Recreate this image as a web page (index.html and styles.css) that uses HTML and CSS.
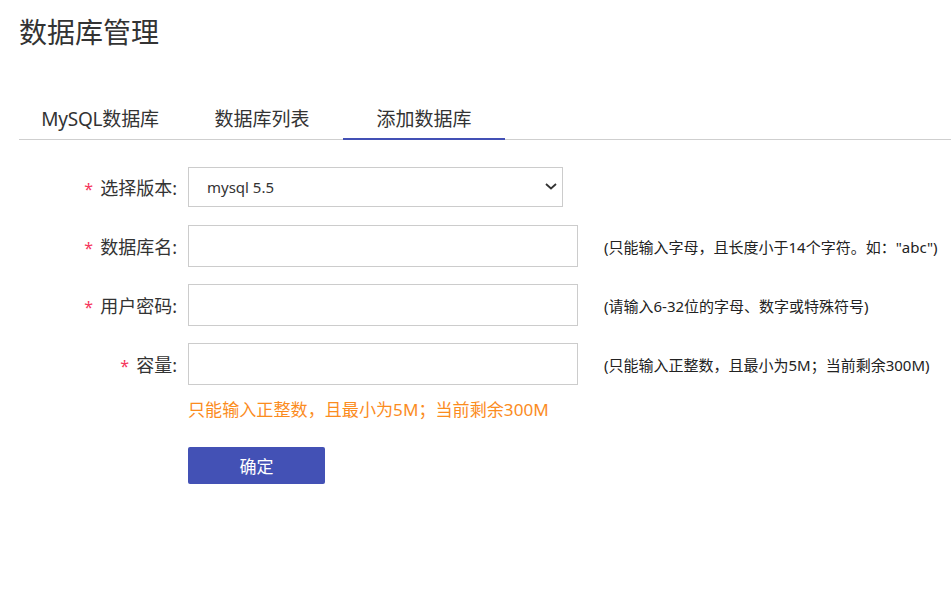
FILE: index.html
```html
<!DOCTYPE html>
<html lang="zh-CN">
<head>
<meta charset="utf-8">
<title>数据库管理</title>
<link rel="stylesheet" href="styles.css">
</head>
<body>
<div class="page">
  <h1 class="title">数据库管理</h1>
  <div class="tabs">
    <div class="tab">MySQL数据库</div>
    <div class="tab">数据库列表</div>
    <div class="tab active">添加数据库</div>
  </div>
  <form class="form">
    <div class="row row-select">
      <label class="label"><span class="req">*</span>选择版本:</label>
      <div class="select-wrap">
        <select class="select">
          <option>mysql 5.5</option>
        </select>
        <svg class="chevron" width="12" height="7" viewBox="0 0 12 7"><path d="M1 1l5 4.5L11 1" fill="none" stroke="#333" stroke-width="1.8"/></svg>
      </div>
    </div>
    <div class="row">
      <label class="label"><span class="req">*</span>数据库名:</label>
      <input class="input" type="text">
      <span class="hint">(只能输入字母，且长度小于14个字符。如："abc")</span>
    </div>
    <div class="row">
      <label class="label"><span class="req">*</span>用户密码:</label>
      <input class="input" type="text">
      <span class="hint">(请输入6-32位的字母、数字或特殊符号)</span>
    </div>
    <div class="row">
      <label class="label"><span class="req">*</span>容量:</label>
      <input class="input" type="text">
      <span class="hint">(只能输入正整数，且最小为5M；当前剩余300M)</span>
    </div>
    <div class="error">只能输入正整数，且最小为5M；当前剩余300M</div>
    <button class="btn" type="button">确定</button>
  </form>
</div>
</body>
</html>
```

FILE: styles.css
```css
* { box-sizing: border-box; }
body {
  margin: 0;
  background: #fff;
  color: #333;
  font-family: "Noto Sans", "Noto Sans CJK SC", sans-serif;
}
.page {
  padding-left: 19px;
}
.title {
  margin: 14px 0 0;
  font-size: 28px;
  line-height: 36px;
  font-weight: normal;
  color: #333;
}
.tabs {
  margin-top: 49px;
  display: flex;
  border-bottom: 1px solid #cfcfcf;
}
.tab {
  width: 162px;
  text-align: center;
  font-size: 19px;
  line-height: 40px;
  height: 40px;
  color: #333;
}
.tab:first-child { letter-spacing: -0.2px; }
.tab.active {
  border-bottom: 2px solid #4350b5;
  margin-bottom: -1px;
  height: 41px;
}
.form {
  margin-top: 27px;
  display: flex;
  flex-direction: column;
}
.row {
  display: flex;
  align-items: center;
  margin-bottom: 17px;
}
.row-select { margin-bottom: 18px; }
.label {
  width: 169px;
  padding-right: 11px;
  text-align: right;
  font-size: 18px;
  color: #333;
}
.req {
  color: #f5365c;
  margin-right: 7px;
  font-size: 16px;
}
.select-wrap {
  position: relative;
  width: 375px;
  height: 40px;
}
.select {
  appearance: none;
  -webkit-appearance: none;
  width: 100%;
  height: 100%;
  border: 1px solid #cccccc;
  border-radius: 0;
  background: #fff;
  padding: 0 0 0 18px;
  font-family: "Noto Sans", "Noto Sans CJK SC", sans-serif;
  font-size: 15px;
  color: #333;
}
.chevron {
  position: absolute;
  right: 6px;
  top: 16px;
  pointer-events: none;
}
.input {
  width: 390px;
  height: 42px;
  border: 1px solid #cccccc;
  border-radius: 0;
  background: #fff;
  outline: none;
}
.hint {
  margin-left: 26px;
  font-size: 15px;
  color: #222;
}
.error {
  margin: -4px 0 0 169px;
  font-size: 17.1px;
  line-height: 24px;
  color: #fb8c1e;
}
.btn {
  margin: 25px 0 0 169px;
  width: 137px;
  height: 37px;
  border: none;
  border-radius: 2px;
  background: #4351b5;
  color: #fff;
  font-family: "Noto Sans", "Noto Sans CJK SC", sans-serif;
  font-size: 17px;
  align-self: flex-start;
}
```
